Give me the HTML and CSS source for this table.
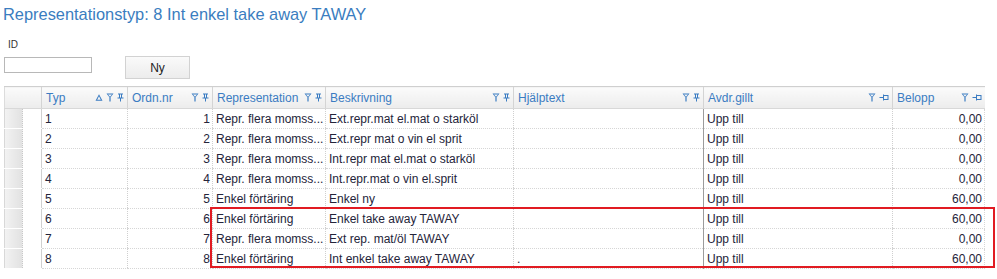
FILE: index.html
```html
<!DOCTYPE html>
<html>
<head>
<meta charset="utf-8">
<link rel="stylesheet" href="styles.css">
</head>
<body>
<svg width="0" height="0" class="defs">
  <defs>
    <symbol id="funnel" viewBox="0 0 8 9"><path d="M0.5 0.5 H7.5 L4.6 4.2 V8.5 H3.4 V4.2 Z M2 1.5 H6 L4 3.8 Z" fill="#3b7cc2" fill-rule="evenodd"/></symbol>
    <symbol id="pinv" viewBox="0 0 7 9"><path d="M1 0.5 H6 V1.5 H5 V4.5 H6.5 V5.5 H4 V8.5 H3 V5.5 H0.5 V4.5 H2 V1.5 H1 Z M3 1.5 V4.5 H4 V1.5 Z" fill="#3b7cc2" fill-rule="evenodd"/></symbol>
    <symbol id="pinh" viewBox="0 0 10 7"><path d="M0.5 3 H4 V0.5 H5 V1 H9.5 V6 H5 V6.5 H4 V4 H0.5 Z M5 2 V5 H8.5 V2 Z" fill="#3b7cc2" fill-rule="evenodd"/></symbol>
    <symbol id="sortup" viewBox="0 0 8 8"><path d="M4 0.8 L7.5 7.2 H0.5 Z M4 2.8 L2.2 6.2 H5.8 Z" fill="#3b7cc2" fill-rule="evenodd"/></symbol>
  </defs>
</svg>
<div class="page">
  <h1 class="title">Representationstyp: 8 Int enkel take away TAWAY</h1>
  <div class="form">
    <label class="lbl">ID</label>
    <div class="form-row">
      <input class="inp" type="text">
      <button class="btn">Ny</button>
    </div>
  </div>
  <div class="grid-wrap">
    <table class="grid">
      <colgroup>
        <col style="width:37px"><col style="width:86px"><col style="width:85px"><col style="width:113px"><col style="width:188px"><col style="width:190px"><col style="width:189px"><col style="width:92px">
      </colgroup>
      <thead>
        <tr>
          <th class="sel"></th>
          <th><div class="hc"><span>Typ</span><span class="ic"><svg class="i8"><use href="#sortup"/></svg><svg class="i8"><use href="#funnel"/></svg><svg class="i7"><use href="#pinv"/></svg></span></div></th>
          <th><div class="hc"><span>Ordn.nr</span><span class="ic"><svg class="i8"><use href="#funnel"/></svg><svg class="i7"><use href="#pinv"/></svg></span></div></th>
          <th><div class="hc"><span>Representation</span><span class="ic"><svg class="i8"><use href="#funnel"/></svg><svg class="i7"><use href="#pinv"/></svg></span></div></th>
          <th><div class="hc"><span>Beskrivning</span><span class="ic"><svg class="i8"><use href="#funnel"/></svg><svg class="i7"><use href="#pinv"/></svg></span></div></th>
          <th><div class="hc"><span>Hjälptext</span><span class="ic"><svg class="i8"><use href="#funnel"/></svg><svg class="i7"><use href="#pinv"/></svg></span></div></th>
          <th><div class="hc"><span>Avdr.gillt</span><span class="ic"><svg class="i8"><use href="#funnel"/></svg><svg class="i10"><use href="#pinh"/></svg></span></div></th>
          <th><div class="hc"><span>Belopp</span><span class="ic"><svg class="i8"><use href="#funnel"/></svg><svg class="i10"><use href="#pinh"/></svg></span></div></th>
        </tr>
      </thead>
      <tbody>
        <tr><td class="sel"><div class="selbox"></div></td><td>1</td><td class="num">1</td><td>Repr. flera momss...</td><td>Ext.repr.mat el.mat o starköl</td><td></td><td class="avdr">Upp till</td><td class="num">0,00</td></tr>
        <tr><td class="sel"><div class="selbox"></div></td><td>2</td><td class="num">2</td><td>Repr. flera momss...</td><td>Ext.repr mat o vin el sprit</td><td></td><td class="avdr">Upp till</td><td class="num">0,00</td></tr>
        <tr><td class="sel"><div class="selbox"></div></td><td>3</td><td class="num">3</td><td>Repr. flera momss...</td><td>Int.repr mat el.mat o starköl</td><td></td><td class="avdr">Upp till</td><td class="num">0,00</td></tr>
        <tr><td class="sel"><div class="selbox"></div></td><td>4</td><td class="num">4</td><td>Repr. flera momss...</td><td>Int.repr.mat o vin el.sprit</td><td></td><td class="avdr">Upp till</td><td class="num">0,00</td></tr>
        <tr><td class="sel"><div class="selbox"></div></td><td>5</td><td class="num">5</td><td>Enkel förtäring</td><td>Enkel ny</td><td></td><td class="avdr">Upp till</td><td class="num">60,00</td></tr>
        <tr><td class="sel"><div class="selbox"></div></td><td>6</td><td class="num">6</td><td>Enkel förtäring</td><td>Enkel take away TAWAY</td><td></td><td class="avdr">Upp till</td><td class="num">60,00</td></tr>
        <tr><td class="sel"><div class="selbox"></div></td><td>7</td><td class="num">7</td><td>Repr. flera momss...</td><td>Ext rep. mat/öl TAWAY</td><td></td><td class="avdr">Upp till</td><td class="num">0,00</td></tr>
        <tr><td class="sel"><div class="selbox"></div></td><td>8</td><td class="num">8</td><td>Enkel förtäring</td><td>Int enkel take away TAWAY</td><td>.</td><td class="avdr">Upp till</td><td class="num">60,00</td></tr>
      </tbody>
    </table>
    <div class="highlight"></div>
  </div>
</div>
</body>
</html>
```
FILE: styles.css
```css
* { box-sizing: border-box; }
html, body { margin: 0; padding: 0; background: #fff; }
.defs { position: absolute; width: 0; height: 0; }
.page {
  font-family: "Liberation Sans", Arial, sans-serif;
  font-size: 12px;
  color: #24243a;
  padding: 0 0 0 4px;
}
.title {
  margin: 0;
  padding: 4px 0 0 0;
  margin-left: -1px;
  height: 38px;
  font-weight: normal;
  font-size: 16.4px;
  color: #3a7dc0;
  line-height: 20px;
}
.form { display: flex; flex-direction: column; }
.lbl {
  font-size: 10px;
  color: #333;
  padding-left: 4px;
  height: 18px;
  line-height: 14px;
}
.form-row { display: flex; align-items: flex-start; gap: 33px; height: 30px; }
.inp {
  margin-top: 1px;
  width: 88px;
  height: 16px;
  border: 1px solid #b8b8b8;
  padding: 0;
  background: #fff;
}
.btn {
  width: 65px;
  height: 23px;
  border: 1px solid #d2d2d2;
  background: linear-gradient(#fafafa, #ececec);
  font-family: "Liberation Sans", Arial, sans-serif;
  font-size: 12px;
  color: #222;
  padding: 0;
}
.grid-wrap { position: relative; width: 980px; }
.grid {
  border-collapse: collapse;
  table-layout: fixed;
  width: 980px;
}
.grid th {
  height: 22px;
  padding: 0 3px 0 4px;
  font-weight: normal;
  text-align: left;
  color: #3b7cc2;
  background: linear-gradient(#fbfbfb, #ececec);
  border-top: 1px solid #cfcfcf;
  border-bottom: 1px solid #d8d8d8;
  border-left: 1px solid #d4d4d4;
  white-space: nowrap;
}
.grid th.sel { border-left: 1px solid #dcdcdc; }
.hc { display: flex; justify-content: space-between; align-items: center; }
.ic { display: flex; gap: 3px; align-items: center; }
.i8 { width: 8px; height: 9px; }
.i7 { width: 7px; height: 9px; }
.i10 { width: 10px; height: 7px; }
.grid td {
  height: 20px;
  padding: 0 2px 0 3px;
  border-left: 1px dotted #cfcfcf;
  border-bottom: 1px dotted #d6d6d6;
  white-space: nowrap;
  overflow: hidden;
}
.grid td.num { text-align: right; }
.grid td.avdr { border-left: 1px solid #9c9c9c; }
.grid td.sel { padding: 0; border-left: 1px solid #d8d8d8; border-bottom: 1px solid #fff; }
.grid tr td:nth-child(2) { border-left: 1px solid #d0d0d0; }
.selbox {
  width: 18px;
  height: 19px;
  background: linear-gradient(90deg, #f2f2f2, #e2e2e2);
  border-right: 1px dotted #c8c8c8;
}
.grid td:last-child { border-right: 1px dotted #d6d6d6; }
.highlight {
  position: absolute;
  left: 206px;
  top: 121px;
  width: 785px;
  height: 61px;
  border: 2px solid #e11b22;
}
```
